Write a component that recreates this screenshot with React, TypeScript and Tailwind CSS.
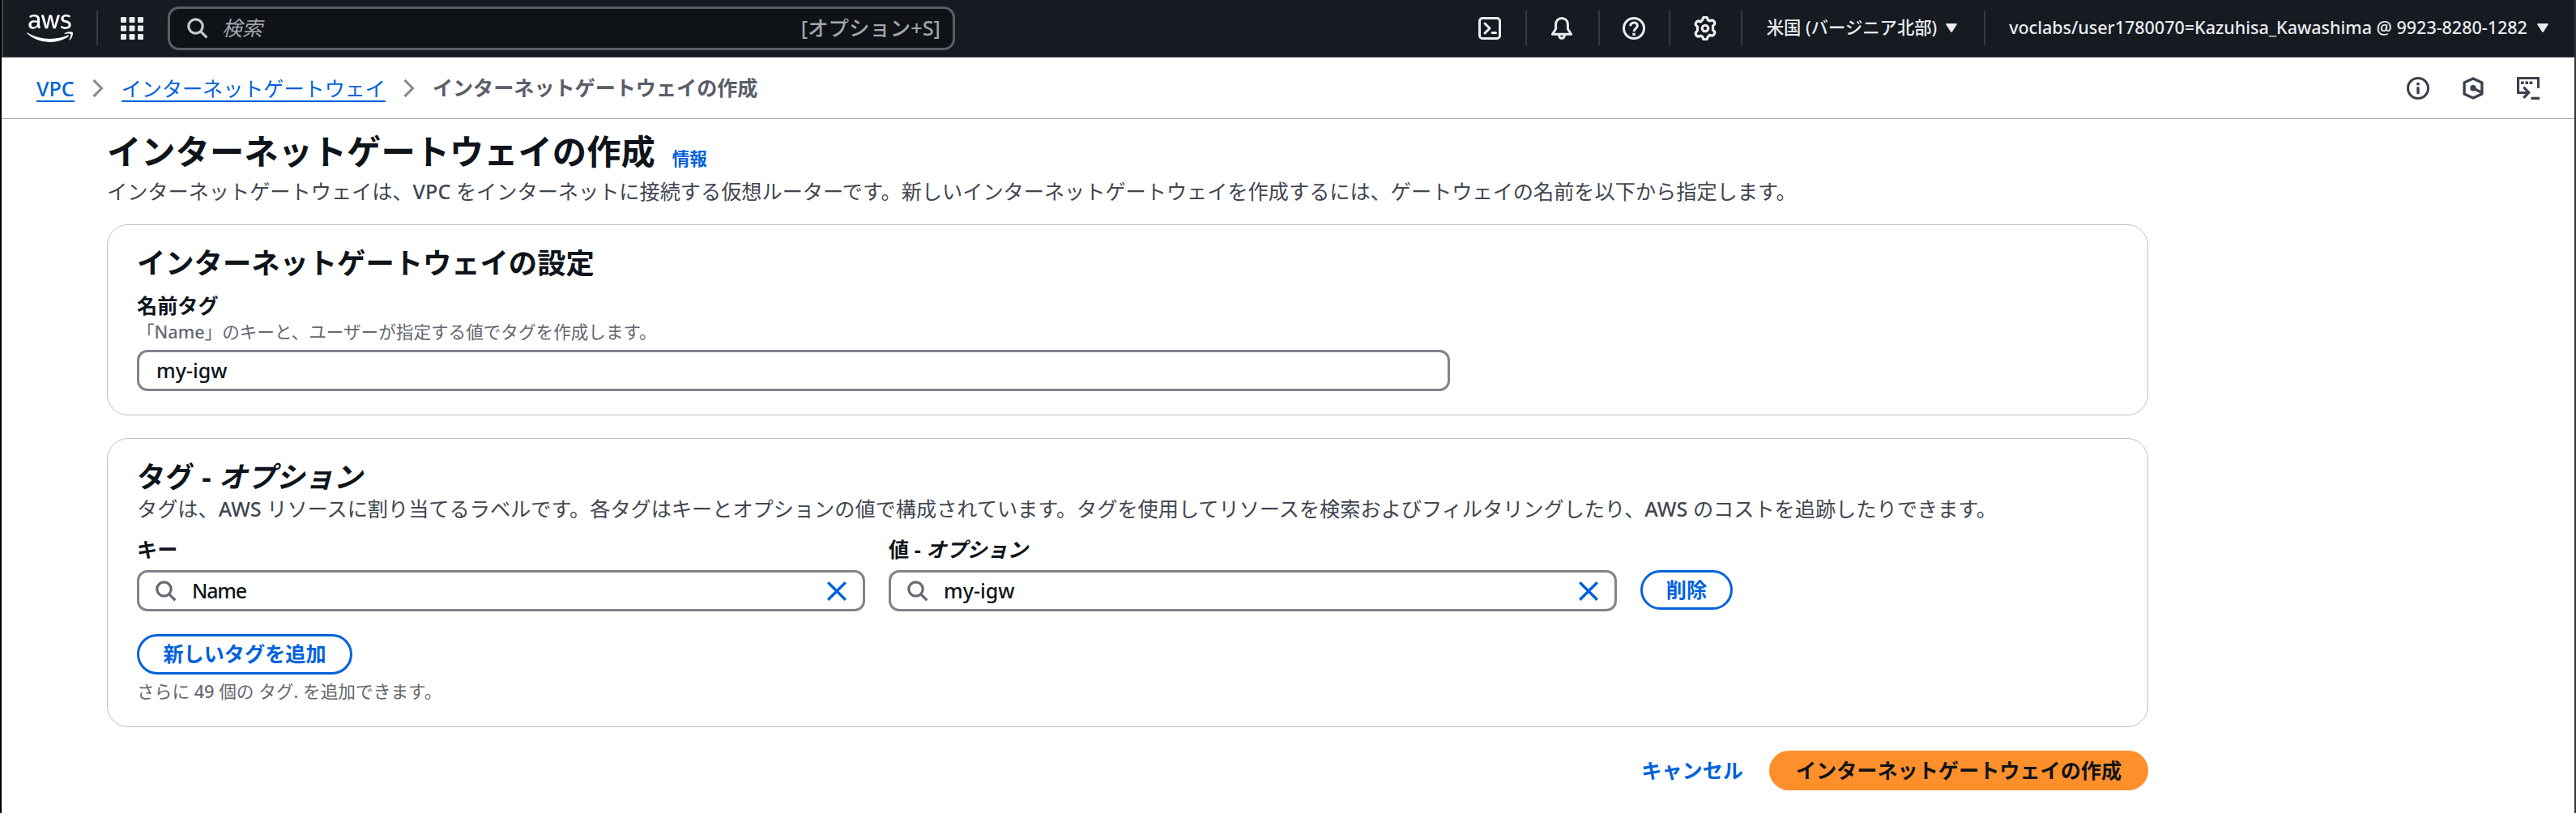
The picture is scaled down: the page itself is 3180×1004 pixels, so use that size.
import type { ReactNode } from 'react';
import { FaAws } from 'react-icons/fa';

const ink = 'fill-none stroke-current';

function SearchIcon({ className }: { className: string }) {
  return (
    <svg viewBox="0 0 26 26" className={`${ink} ${className}`} strokeWidth="3.2">
      <circle cx="10.5" cy="10.5" r="8.7" />
      <path d="M16.8 16.8l7.6 7.6" />
    </svg>
  );
}

function GridIcon() {
  return (
    <svg viewBox="0 0 28 28" className="h-7 w-7 fill-[#ebebf0]">
      {[0, 10.5, 21].map((y) =>
        [0, 10.5, 21].map((x) => <rect key={`${x}-${y}`} x={x} y={y} width="7" height="7" rx="1.2" />),
      )}
    </svg>
  );
}

function ShellIcon() {
  return (
    <svg viewBox="0 0 28 28" className={`${ink} h-7 w-7`} strokeWidth="3" strokeLinejoin="round">
      <rect x="1.5" y="1.5" width="25" height="25" rx="3.5" />
      <path d="M8 8l6 6-6 6M17 19.500h4.500" strokeLinecap="round" />
    </svg>
  );
}

function BellIcon() {
  return (
    <svg viewBox="0 0 28 28" className={`${ink} h-7 w-7`} strokeWidth="3" strokeLinejoin="round">
      <path d="M14 1.6c-4.6 0-7.4 3.3-7.4 7.6v5.6L2.4 21.2h23.2l-4.2-6.4V9.2c0-4.3-2.8-7.6-7.4-7.6z" />
      <path d="M10.6 21.5c0 3 1.3 4.8 3.4 4.8s3.4-1.8 3.4-4.8" />
    </svg>
  );
}

function HelpIcon() {
  return (
    <svg viewBox="0 0 28 28" className={`${ink} h-7 w-7`} strokeWidth="3">
      <circle cx="14" cy="14" r="12.5" />
      <path d="M9.7 11.2c0-2.6 1.8-4.3 4.3-4.3s4.3 1.6 4.3 3.9c0 3.300-4.300 3.300-4.300 7.200" />
      <path d="M14 19.700v3.200" strokeWidth="3.400" />
    </svg>
  );
}

function GearIcon() {
  return (
    <svg viewBox="1 1 26 28" className={`${ink} h-[30px] w-7`} strokeWidth="3" strokeLinejoin="round">
      <path d="M11 5.200C11 3 12 2 14 2s3 1 3 3.200l2.300 1.300c1.900-1.100 3.900-1.300 5.100.7s.500 3.700-1.500 4.900v4.800c2 1.200 2.700 2.900 1.500 4.900s-3.200 1.800-5.100.7L17 24.800C17 27 16 28 14 28s-3-1-3-3.200l-2.300-1.300c-1.900 1.100-3.900 1.300-5.100-.7s-.500-3.700 1.500-4.900v-4.800c-2-1.200-2.700-2.900-1.500-4.900s3.200-1.800 5.100-.7z" />
      <circle cx="14" cy="15" r="3.500" />
    </svg>
  );
}

function InfoIcon() {
  return (
    <svg viewBox="0 0 28 28" className={`${ink} h-7 w-7`} strokeWidth="3">
      <circle cx="14" cy="14" r="12.5" />
      <path d="M14 12.300v8.700M14 7v3.200" strokeWidth="3.400" />
    </svg>
  );
}

function HexIcon() {
  return (
    <svg viewBox="0 0 28 28" className={`${ink} h-7 w-7`} strokeWidth="3.300">
      <path d="M14 1.900l10.900 5v14.200l-10.900 5-10.900-5V6.900z" strokeLinejoin="round" />
      <path d="M14 14l10 5" />
      <circle cx="14" cy="13.800" r="3.700" className="fill-current stroke-none" />
    </svg>
  );
}

function TerminalIcon() {
  return (
    <svg viewBox="0 0 28 28" className={`${ink} h-7 w-7`} strokeWidth="3.200">
      <path d="M26.500 14V1.500h-25v18H13" strokeLinejoin="round" />
      <path d="M8.300 12.600l6.400 6.600-6.400 6.700M17.500 26.300H28" />
      <path d="M5 7.200h3.600M10.500 7.200h3.600M15.700 7.200h3.600" strokeWidth="3.400" />
    </svg>
  );
}

function Caret() {
  return (
    <svg viewBox="0 0 14 11" className="h-[11px] w-[14px] fill-[#ebebf0]">
      <path d="M1 0h12q1.500 0 .7 1.200L8 10.200q-1 1.300-2 0L.3 1.200Q-.500 0 1 0z" />
    </svg>
  );
}

function Chevron() {
  return (
    <svg viewBox="0 0 14 24" className="h-6 w-[14px] fill-none stroke-[#8c8c94]" strokeWidth="3.200">
      <path d="M1.500 1.800L11.500 12 1.500 22.200" />
    </svg>
  );
}

function Divider({ className = '' }: { className?: string }) {
  return <div className={`h-[43px] w-0.5 shrink-0 bg-[#353a44] ${className}`} />;
}

function Cell({ className, children }: { className: string; children: ReactNode }) {
  return <div className={`flex shrink-0 items-center justify-center ${className}`}>{children}</div>;
}

function Header() {
  return (
    <header className="flex h-[71px] items-center border-b border-l-2 border-[#424650] bg-[#161b22] pb-px text-[#ebebf0]">
      <FaAws className="ml-[29px] h-[46px] w-[57px] text-white" />
      <Divider className="ml-[29px]" />
      <div className="ml-[28px]">
        <GridIcon />
      </div>
      <div className="ml-[30px] flex h-[54px] w-[972px] items-center rounded-[14px] border-[3px] border-[#5a5e69] bg-[#0f1318] pr-[15px] pl-[21px] text-[#a4a4ad]">
        <SearchIcon className="h-[26px] w-[26px] text-[#c6c6cd]" />
        <span className="ml-[17px] text-[25px] italic">検索</span>
        <span className="ml-auto text-[25.400px] font-medium">[オプション+S]</span>
      </div>
      <div className="ml-auto flex h-full items-center">
        <Cell className="w-[88px]"><ShellIcon /></Cell>
        <Divider />
        <Cell className="w-[88px] pr-[3px]"><BellIcon /></Cell>
        <Divider />
        <Cell className="w-[85px] pr-px"><HelpIcon /></Cell>
        <Divider />
        <Cell className="w-[87px] pr-0.5"><GearIcon /></Cell>
        <Divider />
        <Cell className="w-[298px] gap-[11px] pr-[3px] text-[21.350px] font-medium">
          <span>米国 (バージニア北部)</span>
          <Caret />
        </Cell>
        <Divider />
        <Cell className="w-[727px] gap-3 pr-[3px] text-[21.500px] font-medium">
          <span>voclabs/user1780070=Kazuhisa_Kawashima @ 9923-8280-1282</span>
          <Caret />
        </Cell>
      </div>
    </header>
  );
}

function Breadcrumbs() {
  const link = 'border-b-2 border-[#0062dc] text-[#0062dc] h-[34px] leading-[34px]';
  return (
    <nav className="flex h-[76px] items-center border-b border-[#a9abb2] pr-[43px] pl-[43px] text-[25.100px]">
      <span className={`${link} font-medium`}>VPC</span>
      <div className="mx-[22px]"><Chevron /></div>
      <span className={link}>インターネットゲートウェイ</span>
      <div className="mx-[22px]"><Chevron /></div>
      <span className="font-bold text-[#5a5e69]">インターネットゲートウェイの作成</span>
      <div className="ml-auto flex gap-[40px] text-[#3c404b]">
        <InfoIcon />
        <HexIcon />
        <TerminalIcon />
      </div>
    </nav>
  );
}

const card = 'flex flex-col items-start rounded-[26px] border border-[#bfc0c5] pl-[36px]';
const field = 'flex h-[51px] items-center rounded-[13px] border-[3px] border-[#82828c] text-[25px] font-medium text-[#0f141a]';
const pill = 'flex items-center justify-center rounded-full border-[3px] border-[#0062dc] text-[25.150px] font-bold text-[#0062dc]';

function TagField({ value, tracking = '' }: { value: string; tracking?: string }) {
  return (
    <div className={`${field} w-[899px] pr-[20px] pl-[20px]`}>
      <SearchIcon className="h-[26px] w-[26px] text-[#656871]" />
      <span className={`ml-[19px] ${tracking}`}>{value}</span>
      <svg viewBox="0 0 24 24" className="ml-auto h-6 w-6 fill-none stroke-[#0062dc]" strokeWidth="3.400">
        <path d="M1.200 1.200l21.600 21.600M22.800 1.200L1.200 22.800" />
      </svg>
    </div>
  );
}

export default function App() {
  return (
    <div
      lang="ja"
      className="h-[1004px] overflow-hidden border-r-2 border-l-2 border-r-[#333539] border-l-black bg-white font-['Noto_Sans','Noto_Sans_CJK_JP',sans-serif] whitespace-nowrap text-[#0f141a]"
    >
      <Header />
      <Breadcrumbs />
      <main className="ml-[130px] flex w-[2520px] flex-col">
        <div className="mt-3 flex h-14 items-center">
          <h1 className="text-[42.300px] leading-[56px] font-bold">インターネットゲートウェイの作成</h1>
          <a className="mt-[18px] ml-[21px] text-[21.600px] font-bold text-[#0062dc]">情報</a>
        </div>
        <p className="mt-[3px] text-[25.180px] leading-[36px] text-[#424650]">
          インターネットゲートウェイは、<span className="font-medium">VPC</span> をインターネットに接続する仮想ルーターです。新しいインターネットゲートウェイを作成するには、ゲートウェイの名前を以下から指定します。
        </p>

        <section className={`${card} mt-[23px] h-[236px] pt-7`}>
          <h2 className="text-[35.300px] leading-[36px] font-bold">インターネットゲートウェイの設定</h2>
          <label className="mt-5 text-[25.150px] leading-[30px] font-bold">名前タグ</label>
          <p className="mt-[5px] text-[21.600px] leading-[25px] text-[#656871]">
            「<span className="font-medium">Name</span>」のキーと、ユーザーが指定する値でタグを作成します。
          </p>
          <div className={`${field} mt-[10px] w-[1621px] pl-[21px]`}>my-igw</div>
        </section>

        <section className={`${card} mt-7 h-[357px] pt-[29px]`}>
          <h2 className="text-[35.500px] leading-[35px] font-bold">
            タグ - <i>オプション</i>
          </h2>
          <p className="mt-1 text-[25.180px] leading-[36px] text-[#424650]">
            タグは、<span className="font-medium">AWS</span> リソースに割り当てるラベルです。各タグはキーとオプションの値で構成されています。タグを使用してリソースを検索およびフィルタリングしたり、<span className="font-medium">AWS</span> のコストを追跡したりできます。
          </p>
          <div className="mt-[18px] flex gap-[29px] text-[25.150px] leading-[29px] font-bold">
            <span className="w-[899px]">キー</span>
            <span>
              値 - <i>オプション</i>
            </span>
          </div>
          <div className="mt-[11px] flex gap-[29px]">
            <TagField value="Name" tracking="tracking-[-1.2px]" />
            <TagField value="my-igw" />
            <button className={`${pill} h-[49px] w-[114px]`}>削除</button>
          </div>
          <button className={`${pill} mt-7 h-[50px] w-[266px]`}>新しいタグを追加</button>
          <p className="mt-2 text-[21.700px] leading-[25px] text-[#656871]">
            さらに <span className="font-medium">49</span> 個の タグ. を追加できます。
          </p>
        </section>

        <div className="mt-[29px] flex h-[49px] items-center justify-end text-[25.150px] font-bold">
          <a className="mr-[32px] text-[#0062dc]">キャンセル</a>
          <button className="flex h-[49px] w-[468px] items-center justify-center rounded-full bg-[#ff8f2b] font-bold">
            インターネットゲートウェイの作成
          </button>
        </div>
      </main>
    </div>
  );
}
